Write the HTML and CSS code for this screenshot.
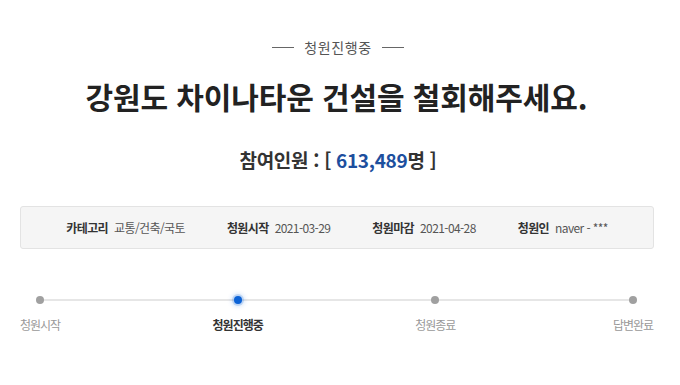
FILE: index.html
```html
<!DOCTYPE html>
<html lang="ko">
<head>
<meta charset="utf-8">
<link rel="stylesheet" href="styles.css">
</head>
<body>
<div class="page">
  <div class="status"><span class="status-line"></span><span class="status-text">청원진행중</span><span class="status-line"></span></div>
  <h1 class="title">강원도 차이나타운 건설을 철회해주세요.</h1>
  <div class="count">참여인원 : [ <span class="count-num">613,489</span>명 ]</div>
  <div class="info">
    <div class="info-item"><span class="info-label">카테고리</span><span class="info-value">교통/건축/국토</span></div>
    <div class="info-item"><span class="info-label">청원시작</span><span class="info-value">2021-03-29</span></div>
    <div class="info-item"><span class="info-label">청원마감</span><span class="info-value">2021-04-28</span></div>
    <div class="info-item"><span class="info-label">청원인</span><span class="info-value">naver - ***</span></div>
  </div>
  <div class="progress">
    <div class="step"><span class="dot"></span><span class="step-label">청원시작</span></div>
    <div class="step active"><span class="dot"></span><span class="step-label">청원진행중</span></div>
    <div class="step"><span class="dot"></span><span class="step-label">청원종료</span></div>
    <div class="step"><span class="dot"></span><span class="step-label">답변완료</span></div>
  </div>
</div>
</body>
</html>
```

FILE: styles.css
```css
html, body {
  margin: 0;
  padding: 0;
  background: #ffffff;
}
body {
  font-family: "Noto Sans CJK KR", "Noto Sans", sans-serif;
  color: #222;
}
.page {
  width: 680px;
  padding: 37px 0 0;
  box-sizing: border-box;
}
.status {
  display: flex;
  justify-content: center;
  align-items: center;
  gap: 10px;
  height: 20px;
  font-size: 14px;
  color: #555;
  padding-right: 4px;
}
.status-line {
  width: 22px;
  height: 1px;
  background: #666;
}
.status-text {
  line-height: 20px;
  letter-spacing: 0.6px;
}
.title {
  margin: 19px 0 0;
  padding-right: 7px;
  text-align: center;
  font-size: 30px;
  line-height: 40px;
  font-weight: 700;
  color: #222;
  letter-spacing: -0.1px;
}
.count {
  margin-top: 31px;
  padding-right: 4px;
  text-align: center;
  font-size: 19px;
  line-height: 26px;
  font-weight: 700;
  color: #333;
  letter-spacing: -0.3px;
}
.count-num {
  color: #1d4f9e;
}
.info {
  margin: 33px 26px 0 20px;
  height: 43px;
  box-sizing: border-box;
  border: 1px solid #e3e3e3;
  border-radius: 3px;
  background: #f5f5f5;
  display: flex;
  justify-content: center;
  align-items: center;
  gap: 42px;
  font-size: 12px;
  letter-spacing: -0.6px;
}
.info-item {
  display: flex;
  gap: 6px;
  align-items: baseline;
}
.info-label {
  font-weight: 700;
  color: #333;
}
.info-value {
  color: #555;
}
.progress {
  position: relative;
  margin: 44px 27px 0 20px;
  display: flex;
  justify-content: space-between;
}
.progress::before {
  content: "";
  position: absolute;
  left: 20px;
  right: 20px;
  top: 6px;
  height: 2px;
  background: #e6e6e6;
}
.step {
  width: 40px;
  display: flex;
  flex-direction: column;
  align-items: center;
  position: relative;
}
.dot {
  display: block;
  margin-top: 3px;
  width: 8px;
  height: 8px;
  border-radius: 50%;
  background: #a0a0a0;
}
.step.active .dot {
  background: #0b62d6;
  box-shadow: 0 0 0 2px rgba(11, 98, 214, 0.18), 0 0 4px 3px rgba(11, 98, 214, 0.15);
}
.step-label {
  margin-top: 13px;
  white-space: nowrap;
  font-size: 12px;
  line-height: 16px;
  color: #999;
  letter-spacing: -1px;
}
.step.active .step-label {
  color: #333;
  font-weight: 700;
}
```
